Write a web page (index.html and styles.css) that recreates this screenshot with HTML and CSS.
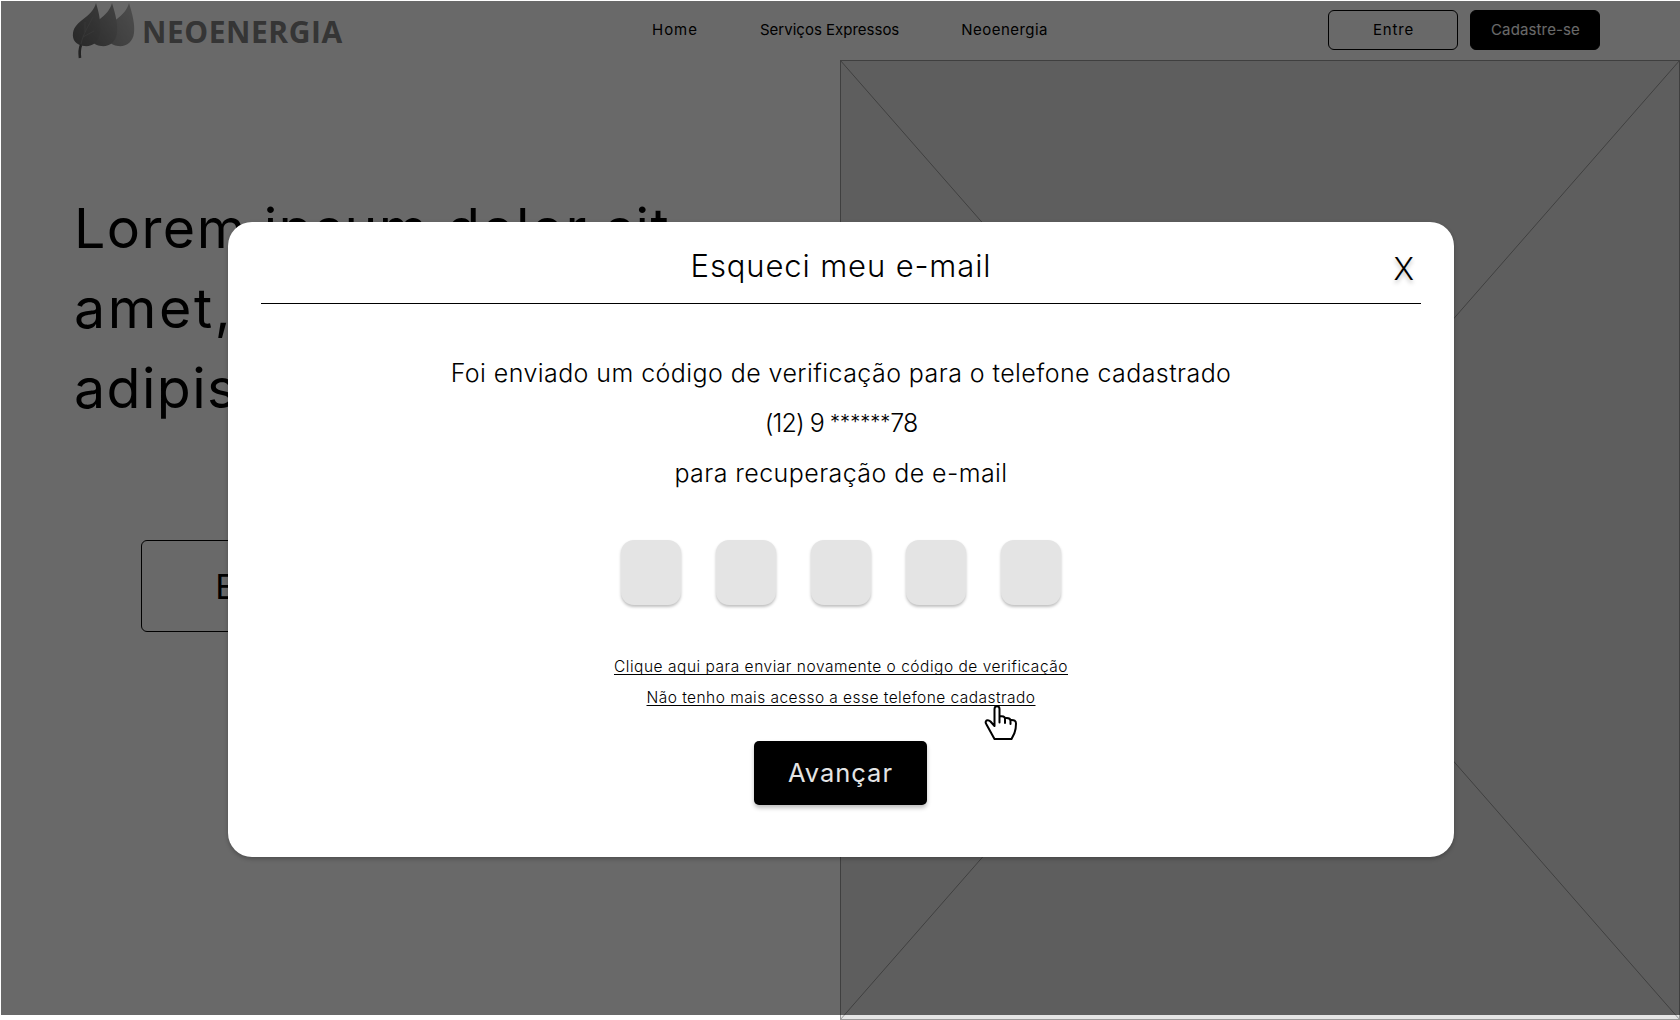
FILE: index.html
```
<!DOCTYPE html>
<html lang="pt-BR">
<head>
<meta charset="utf-8">
<title>Neoenergia</title>
<link rel="stylesheet" href="styles.css">
</head>
<body>
<div class="page">
  <header class="header">
    <div class="logo">
      <svg class="logo-mark" viewBox="0 0 64 60" aria-hidden="true">
        <defs>
          <linearGradient id="leaf1" x1="0" y1="1" x2="1" y2="0"><stop offset="0" stop-color="#606060"/><stop offset="1" stop-color="#8c8c8c"/></linearGradient>
          <linearGradient id="leaf2" x1="0" y1="1" x2="1" y2="0"><stop offset="0" stop-color="#707070"/><stop offset="1" stop-color="#a2a2a2"/></linearGradient>
          <linearGradient id="leaf3" x1="0" y1="1" x2="1" y2="0"><stop offset="0" stop-color="#909090"/><stop offset="1" stop-color="#bcbcbc"/></linearGradient>
        </defs>
        <path fill="url(#leaf3)" d="M57 3C61 16 63 25 62 33C61 42 54 47 46 46C38 45 34 40 35 33C37 20 53 18 57 3Z"/>
        <path fill="url(#leaf2)" d="M40 3C44 16 46 25 45 33C44 42 37 47 29 46C21 45 17 40 18 33C20 20 36 18 40 3Z"/>
        <path fill="url(#leaf1)" d="M24 3C28 16 29 25 28 33C27 42 20 47 12 46C4 45 0 40 1 33C3 20 20 18 24 3Z"/>
        <path fill="none" stroke="#8c8c8c" stroke-width=".7" d="M9 44C11 34 17 25 21 17M13 32L13 22M11 37L22 31"/>
        <path fill="none" stroke="#555" stroke-width="2.6" d="M9 45Q7 50 8 58"/>
      </svg>
      <span class="logo-name">NEOENERGIA</span>
    </div>
    <nav class="nav">
      <a class="nav-home">Home</a>
      <a class="nav-services">Serviços Expressos</a>
      <a class="nav-brand">Neoenergia</a>
    </nav>
    <div class="actions">
      <a class="btn btn-login">Entre</a>
      <a class="btn btn-dark">Cadastre-se</a>
    </div>
  </header>
  <main class="hero">
    <section class="hero-copy">
      <h1 class="hero-title">Lorem ipsum dolor sit <span class="wide">amet, </span>consectetur adipiscing</h1>
      <a class="hero-btn">Entre</a>
    </section>
    <svg class="placeholder" viewBox="0 0 840 960" aria-hidden="true">
      <rect x=".5" y=".5" width="839" height="959" fill="#e5e5e5" stroke="#999"/>
      <path d="M0 0L840 960M840 0L0 960" stroke="#999" fill="none"/>
    </svg>
  </main>
  <div class="backdrop">
    <section class="modal">
      <div class="modal-head">
        <h2 class="modal-title">Esqueci meu e-mail</h2>
        <span class="close">X</span>
      </div>
      <p class="message">Foi enviado um código de verificação para o telefone cadastrado<br><span class="phone">(12) 9 <span class="mask">******</span>78</span><br>para recuperação de e-mail</p>
      <div class="code"><i class="digit"></i><i class="digit"></i><i class="digit"></i><i class="digit"></i><i class="digit"></i></div>
      <div class="links">
        <a class="resend">Clique aqui para enviar novamente o código de verificação</a>
        <a class="no-access">Não tenho mais acesso a esse telefone cadastrado</a>
      </div>
      <a class="submit">Avançar</a>
    </section>
  </div>
  <svg class="pointer" viewBox="0 0 34 36" aria-hidden="true">
    <path d="M10.500 18.500V4Q10.500 1.200 13 1.200Q15.500 1.200 15.500 4V17.500V11.500Q20.500 10.500 21 13.500V18V13.200Q26 12.500 26.500 15.500V19V15Q32 14.500 32 18.500Q32 24 30.500 28L27.500 34H10.500L2.500 19.500Q.800 17 2.500 15.500Q4.500 14.500 6.500 16.500L10.500 21Z" fill="#fff" stroke="#000" stroke-width="2" stroke-linejoin="round"/>
  </svg>
</div>
</body>
</html>
```
FILE: styles.css
```
* { box-sizing: border-box; }
body { margin: 0; background: #fff; color: #000; font-family: Inter, "Liberation Sans", sans-serif; }
.page { position: relative; width: 1680px; height: 1020px; overflow: hidden; }

.header { display: grid; grid-template-columns: 580px 676px 1fr; height: 60px; padding-left: 72px; align-items: center; }
.logo { display: flex; align-items: center; height: 60px; }
.logo-mark { width: 64px; height: 60px; }
.logo-name { margin-left: 6px; padding-top: 4px; font: 700 30px/40px "Open Sans", sans-serif; letter-spacing: .55px; color: #808080; white-space: nowrap; }
.nav { display: flex; gap: 62px; padding-bottom: 1px; font-size: 15px; line-height: 18px; white-space: nowrap; }
.nav-home { letter-spacing: .99px; }
.nav-brand { letter-spacing: .45px; }
.actions { display: flex; gap: 12px; }
.btn { display: flex; align-items: center; justify-content: center; width: 130px; height: 40px; padding: 0 0 1px 1px; border: 1px solid #000; border-radius: 6px; font-size: 15px; letter-spacing: .13px; white-space: nowrap; }
.btn-login { letter-spacing: .8px; }
.btn-dark { background: #000; color: #fff; }

.hero { display: grid; grid-template-columns: 840px 840px; height: 960px; }
.hero-copy { padding: 128px 0 0 74px; }
.hero-title { width: 640px; margin: 0; font-size: 55.5px; font-weight: 400; line-height: 80px; letter-spacing: 1.41px; }
.hero-title .wide { letter-spacing: 2.6px; }
.hero-btn { display: flex; align-items: center; justify-content: center; width: 250px; height: 92px; margin: 112px 0 0 67px; border: 1px solid #000; border-radius: 6px; font-size: 34px; letter-spacing: 3.6px; }
.placeholder { width: 840px; height: 960px; }

.backdrop { position: absolute; inset: 1px 0 5px 1px; padding: 221px 0 0 227px; background: rgba(0, 0, 0, .588); }
.modal { display: flex; flex-direction: column; align-items: center; width: 1226px; height: 635px; background: #fff; border-radius: 24px; box-shadow: 0 2px 4px rgba(0, 0, 0, .25); }
.modal-head { display: flex; position: relative; justify-content: center; width: 1160px; height: 82px; border-bottom: 1px solid #000; }
.modal-title { margin: 24px 0 0; font-size: 31px; font-weight: 300; line-height: 40px; letter-spacing: .87px; white-space: nowrap; }
.close { position: absolute; right: 7px; top: 27px; font-size: 31px; line-height: 40px; font-weight: 300; text-shadow: 0 3px 4px rgba(0, 0, 0, .25); }
.message { margin: 44px 0 0; font-size: 25px; font-weight: 300; line-height: 50px; letter-spacing: .425px; text-align: center; white-space: nowrap; }
.phone { letter-spacing: -.9px; }
.mask { font-size: 20px; line-height: 0; letter-spacing: 0; vertical-align: 3px; }
.code { display: flex; gap: 35px; margin-top: 42px; }
.digit { width: 60px; height: 65px; border-radius: 13px; background: #e4e4e4; box-shadow: 0 2px 3px rgba(0, 0, 0, .25); }
.links { display: flex; flex-direction: column; align-items: center; margin-top: 46px; font-size: 15.5px; font-weight: 300; line-height: 31px; text-decoration: underline; text-decoration-thickness: 1px; text-underline-offset: 2px; text-decoration-skip-ink: none; white-space: nowrap; }
.resend { letter-spacing: .525px; }
.no-access { letter-spacing: .455px; }
.submit { display: flex; align-items: center; justify-content: center; width: 173px; height: 64px; margin: 28px 1px 0 0; padding-bottom: 2px; border-radius: 5px; background: #000; color: #e4e4e4; font-size: 25.5px; letter-spacing: .97px; box-shadow: 0 3px 4px rgba(0, 0, 0, .25); }
.pointer { position: absolute; left: 984px; top: 705px; width: 34px; height: 36px; }
```
